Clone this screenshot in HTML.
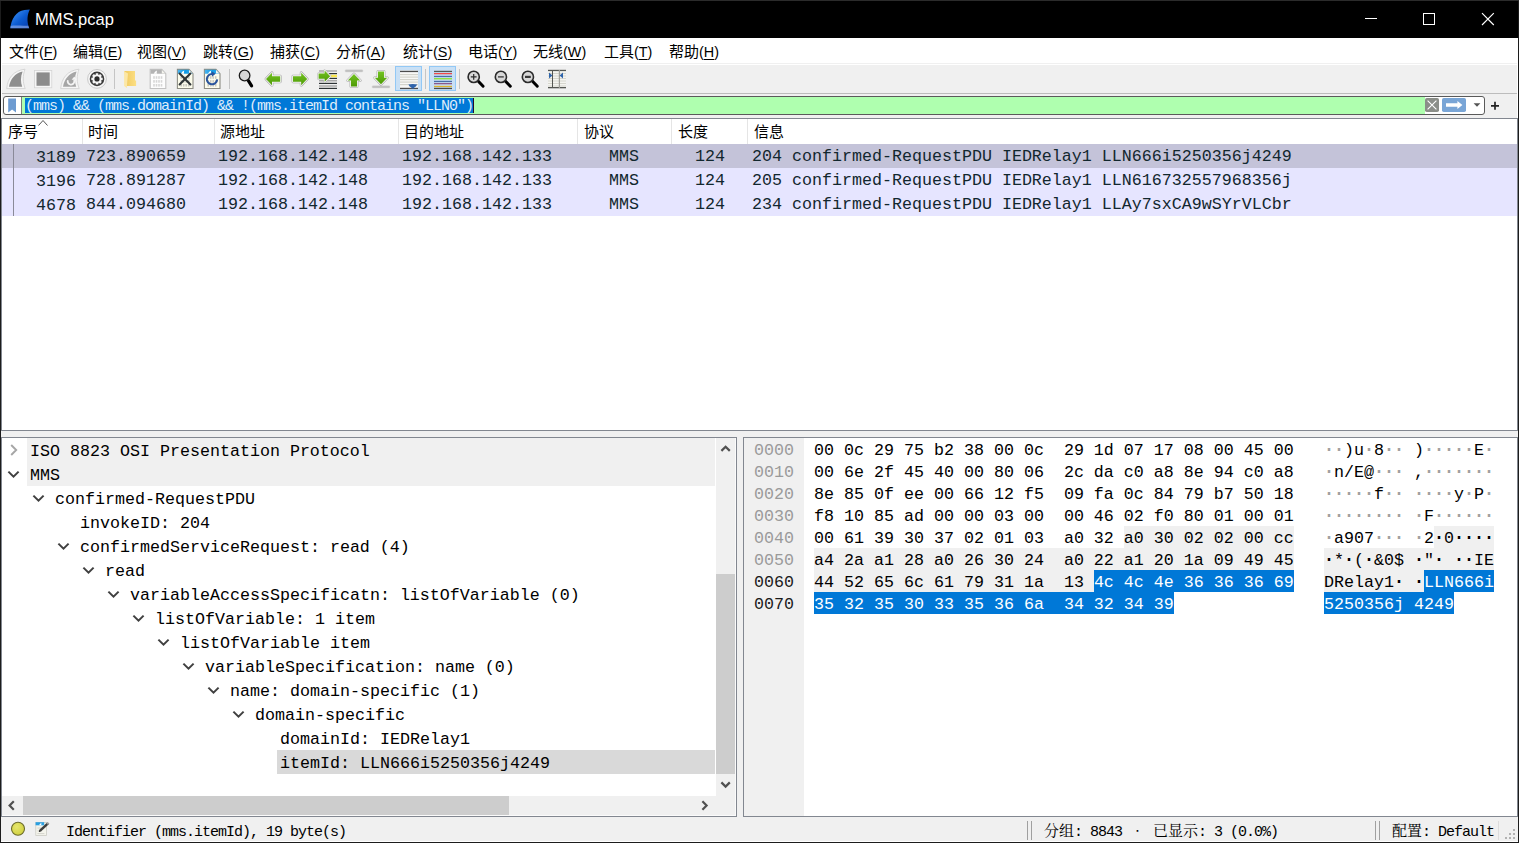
<!DOCTYPE html><html lang="zh-CN"><head><meta charset="utf-8"><title>MMS.pcap</title><style>
*{box-sizing:border-box;margin:0;padding:0}
html,body{width:1519px;height:843px;overflow:hidden;background:#f0f0f0}
body{position:relative;font-family:"Liberation Sans","Noto Sans CJK SC",sans-serif;color:#000}
.abs{position:absolute}
#title{left:0;top:0;width:1519px;height:38px;background:#000}
#title .t{left:35px;top:9px;font-size:15px;transform:scale(1.10,1.09);transform-origin:0 0;line-height:20px;color:#fff;white-space:nowrap}
#menu{left:1px;top:38px;width:1517px;height:27px;background:#fff;border-bottom:0}
#menu i{font-style:normal;font-size:14.4px}
#menu span{position:absolute;top:4px;font-size:15px;line-height:20px;white-space:nowrap}
#menu u{text-decoration:underline;text-underline-offset:2px}
#tb{left:2px;top:65px;width:1515px;height:29px;background:#f0f0f0;border-bottom:1px solid #bcbcbc}
#tbl{left:2px;top:63px;width:1515px;height:1px;background:#f0f0f0}
.sep{position:absolute;top:69px;width:1px;height:20px;background:#c6c6c6}
.tbtn{position:absolute;top:66px;height:25px;background:#cce4f7;border:1px solid #90c8f6}
#filt{left:3px;top:96px;width:1482px;height:19px;border:1px solid #5a5a5a;border-radius:3px;background:#fff;overflow:hidden}
#filt .g{left:18px;top:0;width:1403px;height:17px;background:#afffaf}
#filt .sel{left:21px;top:1px;width:449px;height:15px;background:#0078d7}
.sim{font-family:"Liberation Mono","Noto Serif CJK SC",monospace;font-size:15px;letter-spacing:-1px;white-space:pre}
.cj{font-family:"Noto Serif CJK SC",serif;font-size:15px;letter-spacing:0}
.mono{font-family:"Liberation Mono",monospace;font-size:16.67px;white-space:pre;color:#000}
#plist{left:1px;top:118px;width:1517px;height:313px;background:#fff;border:1px solid #828790}
.hd{position:absolute;top:124px;font-size:15px;line-height:16px;white-space:nowrap}
.hsep{position:absolute;top:119px;width:1px;height:25px;background:#e5e5e5}
.prow{position:absolute;left:2px;width:1515px;height:24px}
.prow span{position:absolute;top:1px;line-height:24px;color:#12272e}
#tree{left:1px;top:437px;width:736px;height:380px;background:#fff;border:1px solid #828790}
#hex{left:743px;top:437px;width:775px;height:380px;background:#fff;border:1px solid #828790}
.trow{position:absolute;height:24px;line-height:24px}
.hrow b,.hrow em{font-weight:normal;font-style:normal;display:inline-block;transform:translateY(-1.3px) scale(1.25)}
.hrow b{color:#a0a0a0}
.hrow{position:absolute;height:22px;line-height:22px;margin-top:2px}
#status{left:1px;top:817px;width:1517px;height:25px;background:#f0f0f0}
</style></head><body>
<div id="title" class="abs">
<svg class="abs" style="left:8px;top:6px" width="26" height="26" viewBox="8 6 26 26"><defs><linearGradient id="fin" x1="0.1" y1="0.1" x2="0.9" y2="0.9"><stop offset="0" stop-color="#3a8ff5"/><stop offset="0.55" stop-color="#0c5bd0"/><stop offset="1" stop-color="#0840b0"/></linearGradient><clipPath id="finc"><path d="M10.3 28.3 C11 19.5 16 11 24.5 9.9 L29.8 9.5 C27.3 14.5 26.5 21 29.2 28.3 Z"/></clipPath></defs><path d="M10.3 28.3 C11 19.5 16 11 24.5 9.9 L29.8 9.5 C27.3 14.5 26.5 21 29.2 28.3 Z" fill="url(#fin)"/><path d="M8 26.6 C14 24.6 22 26.4 32 25.2 V30 H8 Z" fill="#9ab4ee" opacity="0.6" clip-path="url(#finc)"/></svg>
<div class="abs t">MMS.pcap</div>
<svg class="abs" style="left:1360px;top:8px" width="140" height="22" viewBox="0 0 140 22" fill="none" stroke="#fff" stroke-width="1"><path d="M5 10.5H17"/><rect x="63.5" y="5.5" width="11" height="11"/><path d="M122 5.2L133.8 17M133.8 5.2L122 17" stroke-width="1.15"/></svg>
</div>
<div id="menu" class="abs">
<span style="left:8px">文件<i>(<u>F</u>)</i></span>
<span style="left:72px">编辑<i>(<u>E</u>)</i></span>
<span style="left:136px">视图<i>(<u>V</u>)</i></span>
<span style="left:202px">跳转<i>(<u>G</u>)</i></span>
<span style="left:269px">捕获<i>(<u>C</u>)</i></span>
<span style="left:335px">分析<i>(<u>A</u>)</i></span>
<span style="left:402px">统计<i>(<u>S</u>)</i></span>
<span style="left:467px">电话<i>(<u>Y</u>)</i></span>
<span style="left:532px">无线<i>(<u>W</u>)</i></span>
<span style="left:603px">工具<i>(<u>T</u>)</i></span>
<span style="left:668px">帮助<i>(<u>H</u>)</i></span>
</div>
<div id="tb" class="abs"></div><div id="tbl" class="abs"></div>
<svg class="abs" style="left:0;top:64px" width="580" height="30" viewBox="0 64 580 30"><defs><linearGradient id="gg" x1="0" y1="0" x2="0" y2="1"><stop offset="0" stop-color="#73c322"/><stop offset="1" stop-color="#4e9a06"/></linearGradient><linearGradient id="fold" x1="0" y1="0" x2="1" y2="0"><stop offset="0" stop-color="#f0c95e"/><stop offset="1" stop-color="#fcdf84"/></linearGradient><linearGradient id="blu" x1="0" y1="0" x2="1" y2="0"><stop offset="0" stop-color="#4db4ee"/><stop offset="0.5" stop-color="#0f9be6"/><stop offset="1" stop-color="#3aaaea"/></linearGradient></defs><path d="M6.7 88.6 C7.6 78 13.5 70.5 25.0 69.2 C22.6 76 22.6 82 25.2 88.6 Z" fill="#f6f6f6" stroke="#d2d2d2" stroke-width="0.9"/><path d="M9.0 86.8 C10.2 79 15.0 73 22.6 71.4 C20.4 77 20.6 82 22.2 86.8 Z" fill="#8e8e8e"/><rect x="34.4" y="70.4" width="17.4" height="17.4" fill="#f6f6f6" stroke="#d4d4d4" stroke-width="0.8"/><rect x="36.5" y="72.4" width="13.2" height="13.4" fill="#8c8c8c"/><path d="M60.7 88.6 C61.6 78 67.5 70.5 79.0 69.2 C76.6 76 76.6 82 79.2 88.6 Z" fill="#f6f6f6" stroke="#d2d2d2" stroke-width="0.9"/><path d="M63.0 86.8 C64.2 79 69.0 73 76.6 71.4 C74.4 77 74.6 82 76.2 86.8 Z" fill="#a6a6a6"/><path d="M67.9 80.2 A3.3 3.3 0 1 0 74.3 81.2 V79.4" fill="none" stroke="#f4f4f4" stroke-width="1.8"/><path d="M71.6 79.8 L74.3 76.4 L77 79.8 Z" fill="#f4f4f4"/><circle cx="97" cy="78.9" r="9.4" fill="#f6f6f6" stroke="#c4c4c4" stroke-width="0.9"/><circle cx="97" cy="78.9" r="7.3" fill="#3a3a3a"/><polygon points="102.68,77.75 102.68,80.05 101.02,80.41 100.92,80.67 101.83,82.10 100.20,83.73 98.77,82.82 98.51,82.92 98.15,84.58 95.85,84.58 95.49,82.92 95.23,82.82 93.80,83.73 92.17,82.10 93.08,80.67 92.98,80.41 91.32,80.05 91.32,77.75 92.98,77.39 93.08,77.13 92.17,75.70 93.80,74.07 95.23,74.98 95.49,74.88 95.85,73.22 98.15,73.22 98.51,74.88 98.77,74.98 100.20,74.07 101.83,75.70 100.92,77.13 101.02,77.39" fill="#f4f4f4"/><circle cx="97" cy="78.9" r="2.6" fill="#2b2b2b"/><rect x="114" y="69" width="1" height="20" fill="#c5c5c5"/><rect x="229" y="69" width="1" height="20" fill="#c5c5c5"/><rect x="425" y="69" width="1" height="20" fill="#c5c5c5"/><rect x="459" y="69" width="1" height="20" fill="#c5c5c5"/><path d="M124.3 71 H135 V80.4 H136.1 V85.9 H127 V88 Z" fill="url(#fold)"/><path d="M124.1 71.2 L128 73.6 L127.2 82.5 L126.8 88.1 L124.1 86 Z" fill="#fce7a6"/><path d="M150.2 69.4 H161.8 L165.8 73.6 V88.5 H150.2 Z" fill="#fdfdfd" stroke="#c2c2c2" stroke-width="1.1"/><path d="M150.6 69.8 H161.6 L165.4 73.7 H150.6 Z" fill="#b4b4b4"/><path d="M153.8 73.7 C154.8 72 155.8 71 157.1 70.6 C156.6 72 156.6 73 157.0 73.7 Z" fill="#fff"/><path d="M161.8 70 L165.2 73.4 H161.8 Z" fill="#f4f4ee"/><rect x="153.2" y="76.2" width="1.6" height="2.6" fill="#d6d6d6"/><rect x="155.7" y="76.2" width="1.6" height="2.6" fill="#d6d6d6"/><rect x="158.2" y="76.2" width="1.6" height="2.6" fill="#d6d6d6"/><rect x="160.7" y="76.2" width="1.6" height="2.6" fill="#d6d6d6"/><rect x="153.2" y="80.1" width="1.6" height="2.6" fill="#d6d6d6"/><rect x="155.7" y="80.1" width="1.6" height="2.6" fill="#d6d6d6"/><rect x="158.2" y="80.1" width="1.6" height="2.6" fill="#d6d6d6"/><rect x="160.7" y="80.1" width="1.6" height="2.6" fill="#d6d6d6"/><rect x="153.2" y="84.0" width="1.6" height="2.6" fill="#d6d6d6"/><rect x="155.7" y="84.0" width="1.6" height="2.6" fill="#d6d6d6"/><rect x="158.2" y="84.0" width="1.6" height="2.6" fill="#d6d6d6"/><rect x="160.7" y="84.0" width="1.6" height="2.6" fill="#d6d6d6"/><path d="M177.4 69.4 H189.0 L193.0 73.6 V88.5 H177.4 Z" fill="#fcfcec" stroke="#8d8d84" stroke-width="1.1"/><path d="M177.8 69.8 H188.8 L192.6 73.7 H177.8 Z" fill="url(#blu)"/><path d="M181.0 73.7 C182.0 72 183.0 71 184.3 70.6 C183.8 72 183.8 73 184.2 73.7 Z" fill="#fff"/><path d="M189.0 70 L192.4 73.4 H189.0 Z" fill="#f4f4ee"/><rect x="180.4" y="76.2" width="1.6" height="2.6" fill="#c9c9c0"/><rect x="182.9" y="76.2" width="1.6" height="2.6" fill="#c9c9c0"/><rect x="185.4" y="76.2" width="1.6" height="2.6" fill="#c9c9c0"/><rect x="187.9" y="76.2" width="1.6" height="2.6" fill="#c9c9c0"/><rect x="180.4" y="80.1" width="1.6" height="2.6" fill="#c9c9c0"/><rect x="182.9" y="80.1" width="1.6" height="2.6" fill="#c9c9c0"/><rect x="185.4" y="80.1" width="1.6" height="2.6" fill="#c9c9c0"/><rect x="187.9" y="80.1" width="1.6" height="2.6" fill="#c9c9c0"/><rect x="180.4" y="84.0" width="1.6" height="2.6" fill="#c9c9c0"/><rect x="182.9" y="84.0" width="1.6" height="2.6" fill="#c9c9c0"/><rect x="185.4" y="84.0" width="1.6" height="2.6" fill="#c9c9c0"/><rect x="187.9" y="84.0" width="1.6" height="2.6" fill="#c9c9c0"/><path d="M179.6 73.6 L190.4 84.4 M190.4 73.6 L179.6 84.4" stroke="#2e3436" stroke-width="2.1" stroke-linecap="round"/><path d="M204.4 69.4 H216.0 L220.0 73.6 V88.5 H204.4 Z" fill="#fcfcec" stroke="#8d8d84" stroke-width="1.1"/><path d="M204.8 69.8 H215.8 L219.6 73.7 H204.8 Z" fill="url(#blu)"/><path d="M208.0 73.7 C209.0 72 210.0 71 211.3 70.6 C210.8 72 210.8 73 211.2 73.7 Z" fill="#fff"/><path d="M216.0 70 L219.4 73.4 H216.0 Z" fill="#f4f4ee"/><rect x="207.4" y="76.2" width="1.6" height="2.6" fill="#c9c9c0"/><rect x="209.9" y="76.2" width="1.6" height="2.6" fill="#c9c9c0"/><rect x="212.4" y="76.2" width="1.6" height="2.6" fill="#c9c9c0"/><rect x="214.9" y="76.2" width="1.6" height="2.6" fill="#c9c9c0"/><rect x="207.4" y="80.1" width="1.6" height="2.6" fill="#c9c9c0"/><rect x="209.9" y="80.1" width="1.6" height="2.6" fill="#c9c9c0"/><rect x="212.4" y="80.1" width="1.6" height="2.6" fill="#c9c9c0"/><rect x="214.9" y="80.1" width="1.6" height="2.6" fill="#c9c9c0"/><rect x="207.4" y="84.0" width="1.6" height="2.6" fill="#c9c9c0"/><rect x="209.9" y="84.0" width="1.6" height="2.6" fill="#c9c9c0"/><rect x="212.4" y="84.0" width="1.6" height="2.6" fill="#c9c9c0"/><rect x="214.9" y="84.0" width="1.6" height="2.6" fill="#c9c9c0"/><path d="M217.2 79.4 A5.2 5.2 0 1 1 212.4 73.9" fill="none" stroke="#2a559c" stroke-width="2"/><path d="M211.6 71.2 L215.6 73.8 L212 76.8 Z" fill="#2a559c"/><path d="M248.2 80.4 L251.6 85.8" stroke="#000" stroke-width="3.2" stroke-linecap="round"/><circle cx="244.6" cy="75.5" r="5.3" fill="#d6d6d6" stroke="#1c1c1c" stroke-width="1.3"/><path d="M266 79 L272 72.8 V76.2 H280.2 V81.8 H272 V85.2 Z" fill="none" stroke="#a4a4a4" stroke-width="2.8" stroke-linejoin="round"/><path d="M266 79 L272 72.8 V76.2 H280.2 V81.8 H272 V85.2 Z" fill="url(#gg)" stroke="#f6f6f6" stroke-width="1.7" stroke-linejoin="round" paint-order="stroke"/><path d="M307.2 79 L301.2 72.8 V76.2 H293 V81.8 H301.2 V85.2 Z" fill="none" stroke="#a4a4a4" stroke-width="2.8" stroke-linejoin="round"/><path d="M307.2 79 L301.2 72.8 V76.2 H293 V81.8 H301.2 V85.2 Z" fill="url(#gg)" stroke="#f6f6f6" stroke-width="1.7" stroke-linejoin="round" paint-order="stroke"/><rect x="319" y="70.4" width="18" height="1.2" fill="#9a9a9a"/><rect x="319" y="73.0" width="18" height="1.2" fill="#2e3436"/><rect x="319" y="77.8" width="18" height="1.2" fill="#2e3436"/><rect x="319" y="80.2" width="18" height="1.2" fill="#9a9a9a"/><rect x="319" y="82.8" width="18" height="1.2" fill="#2e3436"/><rect x="319" y="85.4" width="18" height="1.2" fill="#9a9a9a"/><rect x="319" y="87.8" width="18" height="1.2" fill="#2e3436"/><rect x="330" y="74.8" width="7" height="2.4" fill="#fce94f"/><path d="M330.2 76.2 L324.6 70.6 V73.6 H318.6 V78.8 H324.6 V81.8 Z" fill="none" stroke="#b4b4b4" stroke-width="2.4" stroke-linejoin="round"/><path d="M330.2 76.2 L324.6 70.6 V73.6 H318.6 V78.8 H324.6 V81.8 Z" fill="url(#gg)" stroke="#f6f6f6" stroke-width="1.4" stroke-linejoin="round" paint-order="stroke"/><rect x="345" y="69.8" width="18" height="2.2" rx="1" fill="#bdbdbd" stroke="#d8d8d8" stroke-width="0.5"/><path d="M354 74 L360.2 80.4 H357 V86.4 H351 V80.4 H347.8 Z" fill="none" stroke="#a4a4a4" stroke-width="2.8" stroke-linejoin="round"/><path d="M354 74 L360.2 80.4 H357 V86.4 H351 V80.4 H347.8 Z" fill="url(#gg)" stroke="#f6f6f6" stroke-width="1.7" stroke-linejoin="round" paint-order="stroke"/><rect x="372" y="85.8" width="18" height="2.2" rx="1" fill="#bdbdbd" stroke="#d8d8d8" stroke-width="0.5"/><path d="M381 84.2 L387.2 77.8 H384 V71.6 H378 V77.8 H374.8 Z" fill="none" stroke="#a4a4a4" stroke-width="2.8" stroke-linejoin="round"/><path d="M381 84.2 L387.2 77.8 H384 V71.6 H378 V77.8 H374.8 Z" fill="url(#gg)" stroke="#f6f6f6" stroke-width="1.7" stroke-linejoin="round" paint-order="stroke"/><rect x="395.5" y="66.5" width="26" height="24" fill="#c9e0f5" stroke="#92c8f5" stroke-width="1"/><rect x="400" y="70.4" width="18" height="18.6" fill="#f8f8f6"/><rect x="400" y="70.8" width="18" height="1.3" fill="#4c4c4c"/><rect x="400" y="87.8" width="18" height="1.3" fill="#4c4c4c"/><rect x="400" y="74.0" width="18" height="1.2" fill="#d4d4cc"/><rect x="400" y="76.5" width="18" height="1.2" fill="#d4d4cc"/><rect x="400" y="79.0" width="18" height="1.2" fill="#d4d4cc"/><rect x="400" y="81.5" width="18" height="1.2" fill="#d4d4cc"/><rect x="400" y="84.0" width="18" height="1.2" fill="#d4d4cc"/><path d="M408.4 84.6 Q412.8 83.4 417.2 84.6 Q416 87 414.2 87.4 V88.6 H411.4 V87.4 Q409.4 87 408.4 84.6 Z" fill="#2f64ab"/><rect x="429.5" y="66.5" width="26" height="24" fill="#c9e0f5" stroke="#92c8f5" stroke-width="1"/><rect x="434" y="70.8" width="18" height="1.3" fill="#555753"/><rect x="434" y="73.0" width="18" height="1.3" fill="#ef4a4a"/><rect x="434" y="75.8" width="18" height="1.3" fill="#4a6ea8"/><rect x="434" y="78.1" width="18" height="1.3" fill="#8ae234"/><rect x="434" y="80.8" width="18" height="1.3" fill="#4a6ea8"/><rect x="434" y="83.0" width="18" height="1.3" fill="#8a5a8c"/><rect x="434" y="85.8" width="18" height="1.3" fill="#dcb32c"/><rect x="434" y="87.8" width="18" height="1.3" fill="#4c4c4c"/><path d="M478.3 81.2 L483.1 86.2" stroke="#000" stroke-width="3" stroke-linecap="round"/><circle cx="473.7" cy="76.9" r="5.6" fill="#d8d8d8" stroke="#2b2b2b" stroke-width="1.6"/><path d="M470.8 76.9 H476.6 M473.7 74 V79.8" stroke="#2b2b2b" stroke-width="1.2"/><path d="M505.5 81.2 L510.3 86.2" stroke="#000" stroke-width="3" stroke-linecap="round"/><circle cx="500.9" cy="76.9" r="5.6" fill="#d8d8d8" stroke="#2b2b2b" stroke-width="1.6"/><path d="M498.0 76.9 H503.8" stroke="#2b2b2b" stroke-width="1.2"/><path d="M532.5 81.2 L537.3 86.2" stroke="#000" stroke-width="3" stroke-linecap="round"/><circle cx="527.9" cy="76.9" r="5.6" fill="#d8d8d8" stroke="#2b2b2b" stroke-width="1.6"/><rect x="525.0" y="75.8" width="5.8" height="2.2" fill="#3a3a3a"/><rect x="548" y="70" width="18" height="18" fill="#f4f4f0"/><rect x="548" y="73.0" width="18" height="1" fill="#d6d6ce"/><rect x="548" y="75.5" width="18" height="1" fill="#d6d6ce"/><rect x="548" y="78.0" width="18" height="1" fill="#d6d6ce"/><rect x="548" y="80.5" width="18" height="1" fill="#d6d6ce"/><rect x="548" y="83.0" width="18" height="1" fill="#d6d6ce"/><rect x="548" y="85.5" width="18" height="1" fill="#d6d6ce"/><rect x="548" y="69.8" width="18" height="1.3" fill="#555753"/><rect x="548" y="87" width="18" height="1.3" fill="#555753"/><rect x="552" y="70" width="1" height="18" fill="#555753"/><rect x="558.8" y="70" width="1.2" height="18" fill="#a0a09a"/><path d="M549 72.4 L552.4 75.5 L549 78.6 Z" fill="#2f64ab"/><path d="M563 72.4 L559.6 75.5 L563 78.6 Z" fill="#2f64ab"/></svg>
<div id="filt" class="abs"><div class="abs g"></div><div class="abs sel"></div>
<div class="abs sim" style="left:21px;top:1px;line-height:17px;color:rgba(255,255,255,.88)">(mms) &amp;&amp; (mms.domainId) &amp;&amp; !(mms.itemId contains "LLN0")</div>
</div>
<svg class="abs" style="left:0;top:94px" width="1519" height="24" viewBox="0 94 1519 24"><path d="M8.2 98.4 H16 V112.6 L12.1 109.4 L8.2 112.6 Z" fill="#6d9bd1"/><rect x="21" y="97" width="1" height="17" fill="#7a7a7a"/><rect x="1425" y="98" width="14" height="14" rx="1.8" fill="#8b8e89"/><path d="M1427.6 100.6 L1436.4 109.4 M1436.4 100.6 L1427.6 109.4" stroke="#fff" stroke-width="1.1"/><rect x="1442" y="98" width="24" height="14" rx="1.8" fill="#79a5d6"/><path d="M1446 103.2 H1457.4 V101 L1462.4 105 L1457.4 109 V106.8 H1446 Z" fill="#fff"/><path d="M1473.6 103.3 H1480.4 L1477 106.8 Z" fill="#555"/><path d="M1491 105.8 H1499 M1495 101.8 V109.8" stroke="#222" stroke-width="1.7"/></svg>
<div class="abs" style="left:473px;top:98px;width:1px;height:15px;background:#2a0a2a"></div>
<div id="plist" class="abs"></div>
<div class="hd" style="left:8px">序号</div>
<div class="hd" style="left:88px">时间</div>
<div class="hd" style="left:220px">源地址</div>
<div class="hd" style="left:404px">目的地址</div>
<div class="hd" style="left:584px">协议</div>
<div class="hd" style="left:678px">长度</div>
<div class="hd" style="left:754px">信息</div>
<div class="hsep" style="left:82px"></div>
<div class="hsep" style="left:214px"></div>
<div class="hsep" style="left:398px"></div>
<div class="hsep" style="left:577px"></div>
<div class="hsep" style="left:671px"></div>
<div class="hsep" style="left:747px"></div>
<svg class="abs" style="left:37px;top:119px" width="12" height="8" viewBox="0 0 12 8"><path d="M1.5 6.5L6 1.5L10.5 6.5" fill="none" stroke="#555" stroke-width="1"/></svg>
<div class="prow mono" style="top:144px;background:#c4c3d9">
<span style="left:34px;top:2px">3189</span><span style="left:84px">723.890659</span><span style="left:216px">192.168.142.148</span><span style="left:400px">192.168.142.133</span><span style="left:607px">MMS</span><span style="left:693px">124</span><span style="left:750px">204 confirmed-RequestPDU IEDRelay1 LLN666i5250356j4249</span>
</div>
<div class="prow mono" style="top:168px;background:#e6e5ff">
<span style="left:34px;top:2px">3196</span><span style="left:84px">728.891287</span><span style="left:216px">192.168.142.148</span><span style="left:400px">192.168.142.133</span><span style="left:607px">MMS</span><span style="left:693px">124</span><span style="left:750px">205 confirmed-RequestPDU IEDRelay1 LLN616732557968356j</span>
</div>
<div class="prow mono" style="top:192px;background:#e6e5ff">
<span style="left:34px;top:2px">4678</span><span style="left:84px">844.094680</span><span style="left:216px">192.168.142.148</span><span style="left:400px">192.168.142.133</span><span style="left:607px">MMS</span><span style="left:693px">124</span><span style="left:750px">234 confirmed-RequestPDU IEDRelay1 LLAy7sxCA9wSYrVLCbr</span>
</div>
<div class="abs" style="left:13px;top:144px;width:1px;height:72px;background:#8a8a98"></div>
<div id="tree" class="abs"></div>
<div class="abs" style="left:27px;top:438px;width:688px;height:24px;background:#f0f0f0"></div>
<div class="trow mono" style="left:30px;top:440px">ISO 8823 OSI Presentation Protocol</div>
<svg class="abs" style="left:10px;top:444px" width="8" height="12" viewBox="0 0 8 12"><path d="M1.2 1L6.2 6L1.2 11" fill="none" stroke="#a6a6a6" stroke-width="1.9"/></svg>
<div class="abs" style="left:27px;top:462px;width:688px;height:24px;background:#f0f0f0"></div>
<div class="trow mono" style="left:30px;top:464px">MMS</div>
<svg class="abs" style="left:7px;top:470px" width="13" height="9" viewBox="0 0 13 9"><path d="M1.4 1.6L6.5 6.7L11.6 1.6" fill="none" stroke="#404040" stroke-width="2"/></svg>
<div class="trow mono" style="left:55px;top:488px">confirmed-RequestPDU</div>
<svg class="abs" style="left:32px;top:494px" width="13" height="9" viewBox="0 0 13 9"><path d="M1.4 1.6L6.5 6.7L11.6 1.6" fill="none" stroke="#404040" stroke-width="2"/></svg>
<div class="trow mono" style="left:80px;top:512px">invokeID: 204</div>
<div class="trow mono" style="left:80px;top:536px">confirmedServiceRequest: read (4)</div>
<svg class="abs" style="left:57px;top:542px" width="13" height="9" viewBox="0 0 13 9"><path d="M1.4 1.6L6.5 6.7L11.6 1.6" fill="none" stroke="#404040" stroke-width="2"/></svg>
<div class="trow mono" style="left:105px;top:560px">read</div>
<svg class="abs" style="left:82px;top:566px" width="13" height="9" viewBox="0 0 13 9"><path d="M1.4 1.6L6.5 6.7L11.6 1.6" fill="none" stroke="#404040" stroke-width="2"/></svg>
<div class="trow mono" style="left:130px;top:584px">variableAccessSpecificatn: listOfVariable (0)</div>
<svg class="abs" style="left:107px;top:590px" width="13" height="9" viewBox="0 0 13 9"><path d="M1.4 1.6L6.5 6.7L11.6 1.6" fill="none" stroke="#404040" stroke-width="2"/></svg>
<div class="trow mono" style="left:155px;top:608px">listOfVariable: 1 item</div>
<svg class="abs" style="left:132px;top:614px" width="13" height="9" viewBox="0 0 13 9"><path d="M1.4 1.6L6.5 6.7L11.6 1.6" fill="none" stroke="#404040" stroke-width="2"/></svg>
<div class="trow mono" style="left:180px;top:632px">listOfVariable item</div>
<svg class="abs" style="left:157px;top:638px" width="13" height="9" viewBox="0 0 13 9"><path d="M1.4 1.6L6.5 6.7L11.6 1.6" fill="none" stroke="#404040" stroke-width="2"/></svg>
<div class="trow mono" style="left:205px;top:656px">variableSpecification: name (0)</div>
<svg class="abs" style="left:182px;top:662px" width="13" height="9" viewBox="0 0 13 9"><path d="M1.4 1.6L6.5 6.7L11.6 1.6" fill="none" stroke="#404040" stroke-width="2"/></svg>
<div class="trow mono" style="left:230px;top:680px">name: domain-specific (1)</div>
<svg class="abs" style="left:207px;top:686px" width="13" height="9" viewBox="0 0 13 9"><path d="M1.4 1.6L6.5 6.7L11.6 1.6" fill="none" stroke="#404040" stroke-width="2"/></svg>
<div class="trow mono" style="left:255px;top:704px">domain-specific</div>
<svg class="abs" style="left:232px;top:710px" width="13" height="9" viewBox="0 0 13 9"><path d="M1.4 1.6L6.5 6.7L11.6 1.6" fill="none" stroke="#404040" stroke-width="2"/></svg>
<div class="trow mono" style="left:280px;top:728px">domainId: IEDRelay1</div>
<div class="abs" style="left:277px;top:750px;width:438px;height:24px;background:#d9d9d9"></div>
<div class="trow mono" style="left:280px;top:752px">itemId: LLN666i5250356j4249</div>
<div class="abs" style="left:716px;top:438px;width:20px;height:358px;background:#f0f0f0"></div>
<div class="abs" style="left:716px;top:574px;width:19px;height:200px;background:#cdcdcd"></div>
<svg class="abs" style="left:716px;top:438px" width="20" height="358" viewBox="716 438 20 358" fill="none" stroke="#505050" stroke-width="2.2"><path d="M721.4 450.9L725.6 446.7L729.8 450.9"/><path d="M721.4 782.4L725.6 786.6L729.8 782.4"/></svg>
<div class="abs" style="left:2px;top:796px;width:714px;height:20px;background:#f0f0f0"></div>
<div class="abs" style="left:23px;top:796px;width:486px;height:19px;background:#cdcdcd"></div>
<div class="abs" style="left:716px;top:796px;width:20px;height:20px;background:#f0f0f0"></div>
<svg class="abs" style="left:2px;top:796px" width="714" height="20" viewBox="2 796 714 20" fill="none" stroke="#505050" stroke-width="2.2"><path d="M13.8 801.3L9.6 805.5L13.8 809.7"/><path d="M702.4 801.3L706.6 805.5L702.4 809.7"/></svg>
<div id="hex" class="abs"></div>
<div class="abs" style="left:744px;top:438px;width:60px;height:378px;background:#f0f0f0"></div>
<div class="abs" style="left:1124px;top:526px;width:170px;height:22px;background:#f0f0f0"></div>
<div class="abs" style="left:1434px;top:526px;width:60px;height:22px;background:#f0f0f0"></div>
<div class="abs" style="left:814px;top:548px;width:480px;height:22px;background:#f0f0f0"></div>
<div class="abs" style="left:1324px;top:548px;width:170px;height:22px;background:#f0f0f0"></div>
<div class="abs" style="left:814px;top:570px;width:280px;height:22px;background:#f0f0f0"></div>
<div class="abs" style="left:1324px;top:570px;width:100px;height:22px;background:#f0f0f0"></div>
<div class="abs" style="left:1094px;top:570px;width:200px;height:22px;background:#0078d7"></div>
<div class="abs" style="left:1424px;top:570px;width:70px;height:22px;background:#0078d7"></div>
<div class="abs" style="left:814px;top:592px;width:360px;height:22px;background:#0078d7"></div>
<div class="abs" style="left:1324px;top:592px;width:130px;height:22px;background:#0078d7"></div>
<div class="hrow mono" style="left:754px;top:438px;color:#9a9a9a">0000</div>
<div class="hrow mono" style="left:814px;top:438px">00 0c 29 75 b2 38 00 0c  29 1d 07 17 08 00 45 00</div>
<div class="hrow mono" style="left:1324px;top:438px"><b>·</b><b>·</b>)u<b>·</b>8<b>·</b><b>·</b> )<b>·</b><b>·</b><b>·</b><b>·</b><b>·</b>E<b>·</b></div>
<div class="hrow mono" style="left:754px;top:460px;color:#9a9a9a">0010</div>
<div class="hrow mono" style="left:814px;top:460px">00 6e 2f 45 40 00 80 06  2c da c0 a8 8e 94 c0 a8</div>
<div class="hrow mono" style="left:1324px;top:460px"><b>·</b>n/E@<b>·</b><b>·</b><b>·</b> ,<b>·</b><b>·</b><b>·</b><b>·</b><b>·</b><b>·</b><b>·</b></div>
<div class="hrow mono" style="left:754px;top:482px;color:#9a9a9a">0020</div>
<div class="hrow mono" style="left:814px;top:482px">8e 85 0f ee 00 66 12 f5  09 fa 0c 84 79 b7 50 18</div>
<div class="hrow mono" style="left:1324px;top:482px"><b>·</b><b>·</b><b>·</b><b>·</b><b>·</b>f<b>·</b><b>·</b> <b>·</b><b>·</b><b>·</b><b>·</b>y<b>·</b>P<b>·</b></div>
<div class="hrow mono" style="left:754px;top:504px;color:#9a9a9a">0030</div>
<div class="hrow mono" style="left:814px;top:504px">f8 10 85 ad 00 00 03 00  00 46 02 f0 80 01 00 01</div>
<div class="hrow mono" style="left:1324px;top:504px"><b>·</b><b>·</b><b>·</b><b>·</b><b>·</b><b>·</b><b>·</b><b>·</b> <b>·</b>F<b>·</b><b>·</b><b>·</b><b>·</b><b>·</b><b>·</b></div>
<div class="hrow mono" style="left:754px;top:526px;color:#9a9a9a">0040</div>
<div class="hrow mono" style="left:814px;top:526px">00 61 39 30 37 02 01 03  a0 32 a0 30 02 02 00 cc</div>
<div class="hrow mono" style="left:1324px;top:526px"><b>·</b>a907<b>·</b><b>·</b><b>·</b> <b>·</b>2<em>·</em>0<em>·</em><em>·</em><em>·</em><em>·</em></div>
<div class="hrow mono" style="left:754px;top:548px;color:#9a9a9a">0050</div>
<div class="hrow mono" style="left:814px;top:548px">a4 2a a1 28 a0 26 30 24  a0 22 a1 20 1a 09 49 45</div>
<div class="hrow mono" style="left:1324px;top:548px"><em>·</em>*<em>·</em>(<em>·</em>&amp;0$ <em>·</em>"<em>·</em> <em>·</em><em>·</em>IE</div>
<div class="hrow mono" style="left:754px;top:570px;color:#1a1a1a">0060</div>
<div class="hrow mono" style="left:814px;top:570px">44 52 65 6c 61 79 31 1a  13 <span style="color:#fff">4c 4c 4e 36 36 36 69</span></div>
<div class="hrow mono" style="left:1324px;top:570px">DRelay1<em>·</em> <em>·</em><span style="color:#fff">LLN666i</span></div>
<div class="hrow mono" style="left:754px;top:592px;color:#1a1a1a">0070</div>
<div class="hrow mono" style="left:814px;top:592px"><span style="color:#fff">35 32 35 30 33 35 36 6a  34 32 34 39</span></div>
<div class="hrow mono" style="left:1324px;top:592px"><span style="color:#fff">5250356j 4249</span></div>
<div id="status" class="abs"></div>
<svg class="abs" style="left:0;top:817px" width="70" height="25" viewBox="0 817 70 25"><defs><radialGradient id="yl" cx="0.4" cy="0.35" r="0.7"><stop offset="0" stop-color="#e6e66e"/><stop offset="1" stop-color="#cfcf3c"/></radialGradient></defs><circle cx="18" cy="828.8" r="6.5" fill="url(#yl)" stroke="#6c6c2c" stroke-width="1.1"/><rect x="35.8" y="822.4" width="10.6" height="13" fill="#f4f4ec" stroke="#cbcbc4" stroke-width="0.8"/><rect x="35.6" y="822.2" width="8.6" height="3.1" fill="#2a9fe0"/><path d="M39.2 825.3 C39.8 824 40.6 823.2 41.4 822.8 C41.2 823.8 41.2 824.6 41.4 825.3 Z" fill="#fff"/><rect x="37.4" y="827.6" width="6" height="0.9" fill="#d0d0c8"/><rect x="37.4" y="830.4" width="3" height="0.9" fill="#d0d0c8"/><rect x="37.4" y="833.2" width="7" height="0.9" fill="#d0d0c8"/><path d="M40.4 830.4 L48 823.4" stroke="#3e3e3e" stroke-width="2.5"/><path d="M47.2 824.1 L48.6 822.8" stroke="#9a9a9a" stroke-width="2.5"/><path d="M38.8 832 L41.4 831.2 L39.6 829.4 Z" fill="#111"/></svg>
<div class="abs sim" style="left:66px;top:824px;line-height:18px">Identifier (mms.itemId), 19 byte(s)</div>
<div class="abs" style="left:1027px;top:821px;width:1px;height:19px;background:#a0a0a0"></div>
<div class="abs" style="left:1031px;top:821px;width:1px;height:19px;background:#a0a0a0"></div>
<div class="abs" style="left:1375px;top:821px;width:1px;height:19px;background:#a0a0a0"></div>
<div class="abs" style="left:1379px;top:821px;width:1px;height:19px;background:#a0a0a0"></div>
<div class="abs sim" style="left:1044px;top:821px;line-height:18px"><span class="cj">分组</span>: 8843 <span class="cj" style="display:inline-block;width:15px;text-align:center">·</span> <span class="cj">已显示</span>: 3 (0.0%)</div>
<div class="abs sim" style="left:1392px;top:821px;line-height:18px"><span class="cj">配置</span>: Default</div>
<div class="abs" style="left:1498px;top:821px;width:1px;height:19px;background:#dcdcdc"></div>
<svg class="abs" style="left:1504px;top:828px" width="12" height="12" viewBox="0 0 12 12" fill="#b2b2b2"><rect x="9" y="1" width="2" height="2"/><rect x="5" y="5" width="2" height="2"/><rect x="9" y="5" width="2" height="2"/><rect x="1" y="9" width="2" height="2"/><rect x="5" y="9" width="2" height="2"/><rect x="9" y="9" width="2" height="2"/></svg>
<div class="abs" style="left:1px;top:38px;width:1px;height:80px;background:#fff"></div>
<div class="abs" style="left:1517px;top:38px;width:1px;height:80px;background:#fff"></div>
<div class="abs" style="left:735px;top:438px;width:1px;height:378px;background:#fbfbfb"></div>
<div class="abs" style="left:2px;top:815px;width:734px;height:1px;background:#fbfbfb"></div>
<div class="abs" style="left:1px;top:841px;width:1517px;height:1px;background:#fff"></div>
<div class="abs" style="left:0px;top:0px;width:1px;height:843px;background:#1c1c1c"></div>
<div class="abs" style="left:1518px;top:0px;width:1px;height:843px;background:#1c1c1c"></div>
<div class="abs" style="left:0px;top:842px;width:1519px;height:1px;background:#1c1c1c"></div>
<div class="abs" style="left:0px;top:0px;width:1519px;height:1px;background:#2b2b2b"></div>
</body></html>
